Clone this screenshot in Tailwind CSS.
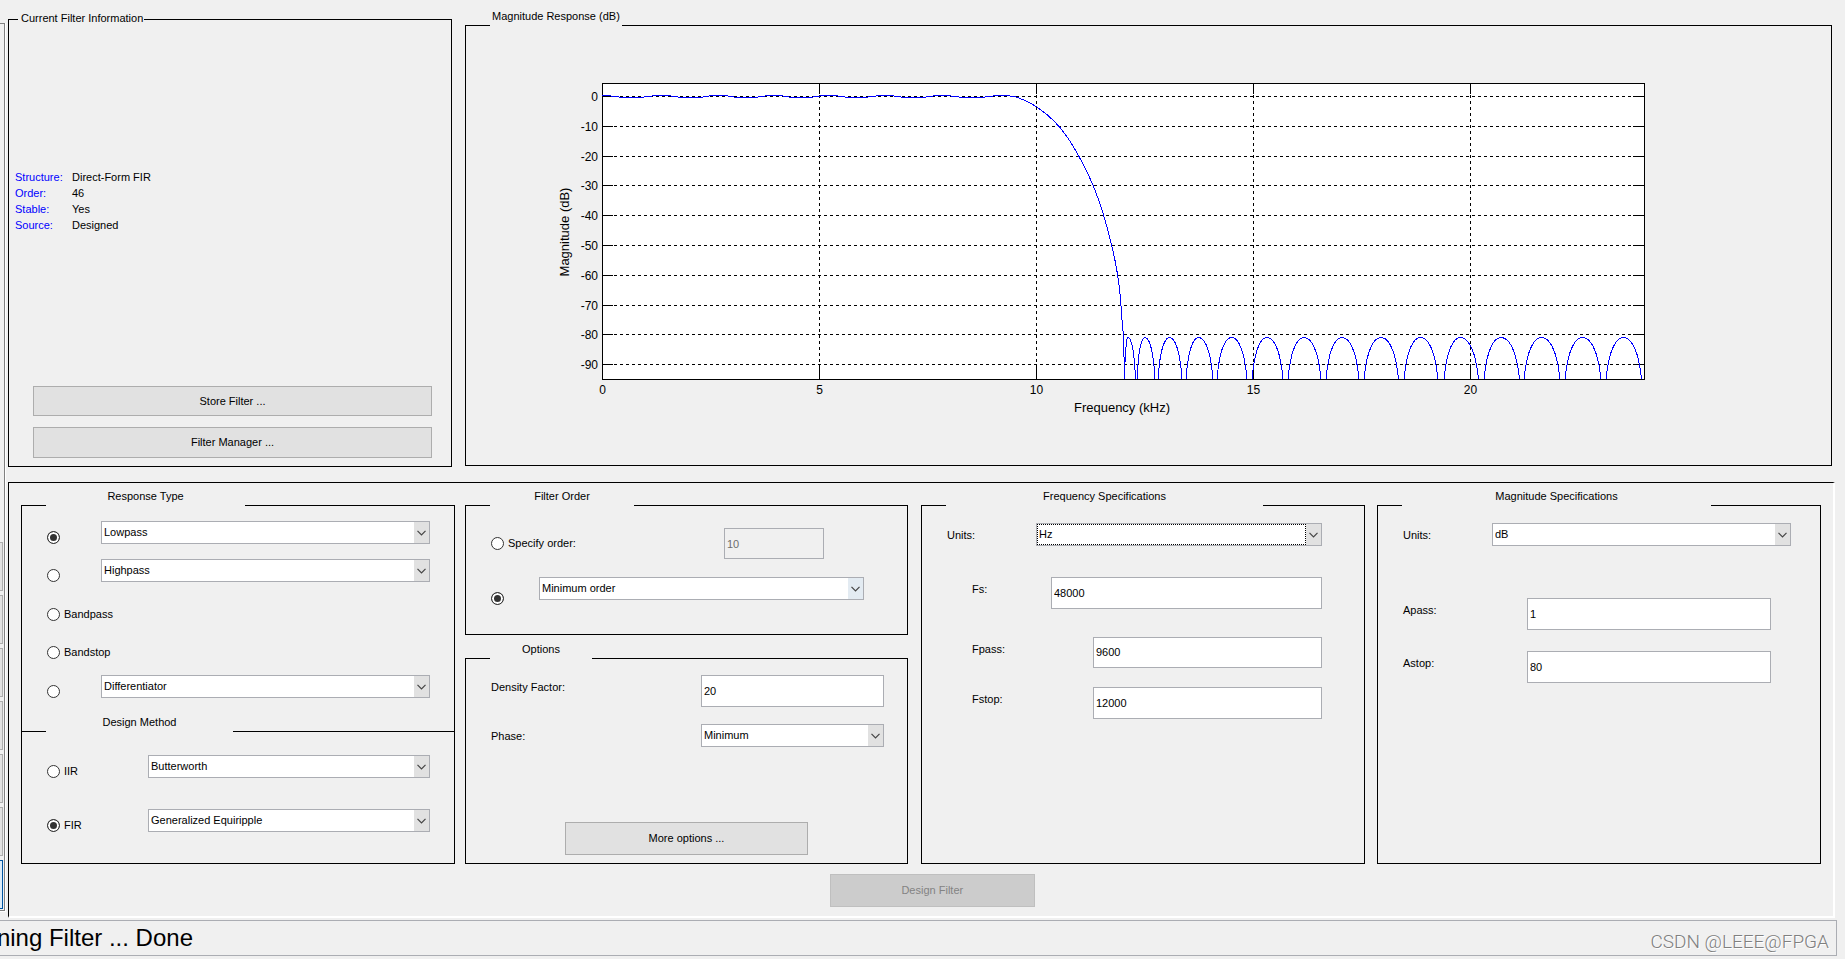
<!DOCTYPE html>
<html lang="en">
<head>
<meta charset="utf-8">
<title>Filter Designer</title>
<script src="https://cdn.jsdelivr.net/npm/@tailwindcss/browser@4"></script>
</head>
<body class="flex min-h-screen flex-col overflow-x-hidden bg-[#f0f0f0] pb-[3px] font-['Liberation_Sans',Arial,sans-serif] text-[11px] leading-3 text-black">
<svg class="hidden" aria-hidden="true">
  <symbol id="chevron" viewBox="0 0 9 6"><path d="M.5 .8 4.5 4.8 8.5 .8" fill="none" stroke="#444" stroke-width="1.2"/></symbol>
</svg>

<div class="flex">
  <!-- Sidebar, cut off by the window's left edge -->
  <aside class="mt-[23px] mb-[6px] flex w-[6px] shrink-0 border-r border-b border-white">
    <div class="flex flex-1 flex-col items-start justify-end gap-1 border-t border-r border-b border-[#808080] pb-px">
      <button type="button" aria-label="Transform" class="h-[49px] w-[3px] border border-l-0 border-[#adadad] bg-[#e1e1e1]"></button>
      <button type="button" aria-label="Quantize" class="h-[49px] w-[3px] border border-l-0 border-[#adadad] bg-[#e1e1e1]"></button>
      <button type="button" aria-label="Realize model" class="h-[49px] w-[3px] border border-l-0 border-[#adadad] bg-[#e1e1e1]"></button>
      <button type="button" aria-label="Pole/zero editor" class="h-[49px] w-[3px] border border-l-0 border-[#adadad] bg-[#e1e1e1]"></button>
      <button type="button" aria-label="Import filter" class="h-[49px] w-[3px] border border-l-0 border-[#adadad] bg-[#e1e1e1]"></button>
      <button type="button" aria-label="Multirate" class="h-[49px] w-[3px] border border-l-0 border-[#adadad] bg-[#e1e1e1]"></button>
      <button type="button" aria-label="Design filter" class="h-[49px] w-[3px] border border-l-0 border-[#0054a0] bg-[#dcebf7]"></button>
    </div>
  </aside>

  <main class="ml-[2px] min-w-0 flex-1 pt-[10px]">
    <div class="mr-[13px] grid grid-cols-[444fr_1367fr] items-start gap-x-[13px]">
      <fieldset class="mt-[3px] min-w-0 border border-black pb-2">
        <legend class="ml-[9px] h-[13px] pr-px pl-[3px] leading-[11px]">Current Filter Information</legend>
        <dl class="mt-[143px] ml-[6px] grid grid-cols-[57px_1fr] leading-4">
          <dt class="text-[#0000ff]">Structure:</dt><dd>Direct-Form FIR</dd>
          <dt class="text-[#0000ff]">Order:</dt><dd>46</dd>
          <dt class="text-[#0000ff]">Stable:</dt><dd>Yes</dd>
          <dt class="text-[#0000ff]">Source:</dt><dd>Designed</dd>
        </dl>
        <div class="mt-[153px] mr-[19px] ml-6 flex flex-col gap-[11px]">
          <button type="button" class="h-[30px] border border-[#adadad] bg-[#e1e1e1]">Store Filter ...</button>
          <button type="button" class="h-[31px] border border-[#adadad] bg-[#e1e1e1] pb-px">Filter Manager ...</button>
        </div>
      </fieldset>

      <fieldset class="min-w-0 border border-black">
        <legend class="ml-6 h-[31px] px-[2px]">Magnitude Response (dB)</legend>
        <svg viewBox="0 0 1365 424" class="block h-auto w-full" role="img" aria-label="Magnitude response plot">
          <g transform="translate(136 42)">
            <rect x="0" y="0" width="1043" height="297" fill="#fff"/>
            <g id="grid" stroke="#000" stroke-width="1" shape-rendering="crispEdges"></g>
            <rect x=".5" y=".5" width="1042" height="296" fill="none" stroke="#000" shape-rendering="crispEdges"/>
            <path id="curve" fill="none" stroke="#0000ff" stroke-width="1" shape-rendering="crispEdges"/>
            <g id="labels" font-size="12"></g>
            <text x="520" y="329" font-size="13" text-anchor="middle">Frequency (kHz)</text>
            <text transform="translate(-33 149) rotate(-90)" font-size="13" text-anchor="middle">Magnitude (dB)</text>
          </g>
        </svg>
      </fieldset>
    </div>

    <form class="mt-[15px] mr-[10px] border-t border-r-2 border-b-2 border-l border-t-black border-r-white border-b-white border-l-black pt-[7px] pb-[9px]">
      <div class="mr-3 ml-3 grid grid-cols-[444fr_456fr_456fr_444fr]">

        <div class="flex min-w-0 flex-col pr-[10px]">
          <fieldset class="min-w-0 border border-b-0 border-black pb-[34px]">
            <legend class="ml-6 h-[31px]"><span class="block w-[199px] text-center">Response Type</span></legend>
            <div class="mr-6 ml-[25px] flex items-end">
              <input type="radio" name="response" aria-label="Lowpass type" checked class="m-0 size-[13px] shrink-0 appearance-none rounded-full border border-[#333] bg-white checked:bg-[#333] checked:shadow-[inset_0_0_0_2px_white]">
              <div class="relative ml-[41px] flex-1">
                <select aria-label="Lowpass" class="block h-[23px] w-full appearance-none border border-[#abadb3] bg-white pb-px pl-[2px]"><option>Lowpass</option></select>
                <span class="pointer-events-none absolute inset-y-px right-px flex w-[15px] items-center justify-center bg-[#e1e1e1]"><svg class="h-[6px] w-[9px]"><use href="#chevron"/></svg></span>
              </div>
            </div>
            <div class="mt-[15px] mr-6 ml-[25px] flex items-end">
              <input type="radio" name="response" aria-label="Highpass type" class="m-0 size-[13px] shrink-0 appearance-none rounded-full border border-[#333] bg-white checked:bg-[#333] checked:shadow-[inset_0_0_0_2px_white]">
              <div class="relative ml-[41px] flex-1">
                <select aria-label="Highpass" class="block h-[23px] w-full appearance-none border border-[#abadb3] bg-white pb-px pl-[2px]"><option>Highpass</option></select>
                <span class="pointer-events-none absolute inset-y-px right-px flex w-[15px] items-center justify-center bg-[#e1e1e1]"><svg class="h-[6px] w-[9px]"><use href="#chevron"/></svg></span>
              </div>
            </div>
            <label class="mt-[26px] ml-[25px] flex gap-1">
              <input type="radio" name="response" class="m-0 size-[13px] shrink-0 appearance-none rounded-full border border-[#333] bg-white checked:bg-[#333] checked:shadow-[inset_0_0_0_2px_white]">Bandpass
            </label>
            <label class="mt-[25px] ml-[25px] flex gap-1">
              <input type="radio" name="response" class="m-0 size-[13px] shrink-0 appearance-none rounded-full border border-[#333] bg-white checked:bg-[#333] checked:shadow-[inset_0_0_0_2px_white]">Bandstop
            </label>
            <div class="mt-[16px] mr-6 ml-[25px] flex items-end">
              <input type="radio" name="response" aria-label="Other type" class="m-0 size-[13px] shrink-0 appearance-none rounded-full border border-[#333] bg-white checked:bg-[#333] checked:shadow-[inset_0_0_0_2px_white]">
              <div class="relative ml-[41px] flex-1">
                <select aria-label="Other response" class="block h-[23px] w-full appearance-none border border-[#abadb3] bg-white pb-px pl-[2px]"><option>Differentiator</option></select>
                <span class="pointer-events-none absolute inset-y-px right-px flex w-[15px] items-center justify-center bg-[#e1e1e1]"><svg class="h-[6px] w-[9px]"><use href="#chevron"/></svg></span>
              </div>
            </div>
          </fieldset>
          <fieldset class="-mt-4 min-w-0 border border-black pb-[31px]">
            <legend class="ml-6 h-[31px]"><span class="block w-[187px] text-center">Design Method</span></legend>
            <div class="mt-2 mr-6 ml-[25px] flex items-end">
              <label class="flex w-[101px] gap-1"><input type="radio" name="method" class="m-0 size-[13px] shrink-0 appearance-none rounded-full border border-[#333] bg-white checked:bg-[#333] checked:shadow-[inset_0_0_0_2px_white]">IIR</label>
              <div class="relative flex-1">
                <select aria-label="IIR method" class="block h-[23px] w-full appearance-none border border-[#abadb3] bg-white pb-px pl-[2px]"><option>Butterworth</option></select>
                <span class="pointer-events-none absolute inset-y-px right-px flex w-[15px] items-center justify-center bg-[#e1e1e1]"><svg class="h-[6px] w-[9px]"><use href="#chevron"/></svg></span>
              </div>
            </div>
            <div class="mt-[31px] mr-6 ml-[25px] flex items-end">
              <label class="flex w-[101px] gap-1"><input type="radio" name="method" checked class="m-0 size-[13px] shrink-0 appearance-none rounded-full border border-[#333] bg-white checked:bg-[#333] checked:shadow-[inset_0_0_0_2px_white]">FIR</label>
              <div class="relative flex-1">
                <select aria-label="FIR method" class="block h-[23px] w-full appearance-none border border-[#abadb3] bg-white pb-px pl-[2px]"><option>Generalized Equiripple</option></select>
                <span class="pointer-events-none absolute inset-y-px right-px flex w-[15px] items-center justify-center bg-[#e1e1e1]"><svg class="h-[6px] w-[9px]"><use href="#chevron"/></svg></span>
              </div>
            </div>
          </fieldset>
        </div>

        <div class="flex min-w-0 flex-col pr-[13px]">
          <fieldset class="min-w-0 border border-black pb-[29px]">
            <legend class="ml-6 h-[31px]"><span class="block w-36 text-center">Filter Order</span></legend>
            <div class="mt-[7px] mr-[83px] ml-[25px] flex items-center justify-between">
              <label class="flex gap-1"><input type="radio" name="order" class="m-0 size-[13px] shrink-0 appearance-none rounded-full border border-[#333] bg-white checked:bg-[#333] checked:shadow-[inset_0_0_0_2px_white]">Specify order:</label>
              <input type="text" aria-label="Order" value="10" disabled class="h-[31px] w-[100px] border border-[#abadb3] bg-[#f0f0f0] pl-[2px] text-[#6d6d6d]">
            </div>
            <div class="mt-[18px] mr-[43px] ml-[25px] flex h-7">
              <input type="radio" name="order" aria-label="Minimum order" checked class="m-0 size-[13px] shrink-0 appearance-none self-end rounded-full border border-[#333] bg-white checked:bg-[#333] checked:shadow-[inset_0_0_0_2px_white]">
              <div class="relative ml-[35px] h-[23px] flex-1">
                <select aria-label="Order mode" class="block h-[23px] w-full appearance-none border border-[#abadb3] bg-white pb-px pl-[2px]"><option>Minimum order</option></select>
                <span class="pointer-events-none absolute inset-y-px right-px flex w-[15px] items-center justify-center bg-[#e3ebf2]"><svg class="h-[6px] w-[9px]"><use href="#chevron"/></svg></span>
              </div>
            </div>
          </fieldset>
          <fieldset class="mt-2 min-w-0 flex-1 border border-black pb-2">
            <legend class="ml-6 h-[31px]"><span class="block w-[102px] text-center">Options</span></legend>
            <div class="mt-px mr-[23px] ml-[25px] flex items-start justify-between">
              <label for="density" class="pt-[6px]">Density Factor:</label>
              <input id="density" type="text" value="20" class="h-8 w-[183px] border border-[#abadb3] bg-white pl-[2px]">
            </div>
            <div class="mt-[17px] mr-[23px] ml-[25px] flex items-start justify-between">
              <label for="phase" class="pt-[6px]">Phase:</label>
              <div class="relative w-[183px]">
                <select id="phase" class="block h-[23px] w-full appearance-none border border-[#abadb3] bg-white pb-px pl-[2px]"><option>Minimum</option></select>
                <span class="pointer-events-none absolute inset-y-px right-px flex w-[15px] items-center justify-center bg-[#e1e1e1]"><svg class="h-[6px] w-[9px]"><use href="#chevron"/></svg></span>
              </div>
            </div>
            <button type="button" class="mx-auto mt-[75px] block h-[33px] w-[243px] border border-[#adadad] bg-[#e1e1e1] pb-px">More options ...</button>
          </fieldset>
        </div>

        <div class="flex min-w-0 pr-3">
          <fieldset class="min-w-0 flex-1 border border-black">
            <legend class="ml-6 h-[31px]"><span class="block w-[317px] text-center">Frequency Specifications</span></legend>
            <div class="mt-[2px] mr-[42px] ml-[25px] flex items-start">
              <label for="funits" class="w-[89px] pt-[6px]">Units:</label>
              <div class="relative flex-1">
                <select id="funits" class="block h-[23px] w-full appearance-none border border-[#abadb3] bg-white pb-px pl-[2px]"><option>Hz</option></select>
                <span class="pointer-events-none absolute inset-y-px right-4 left-px border border-dotted border-black"></span>
                <span class="pointer-events-none absolute inset-y-px right-px flex w-[15px] items-center justify-center bg-[#e1e1e1]"><svg class="h-[6px] w-[9px]"><use href="#chevron"/></svg></span>
              </div>
            </div>
            <div class="mt-[31px] mr-[42px] ml-[50px] flex items-start">
              <label for="fs" class="w-[79px] pt-[6px]">Fs:</label>
              <input id="fs" type="text" value="48000" class="h-8 min-w-0 flex-1 border border-[#abadb3] bg-white pl-[2px]">
            </div>
            <div class="mt-[28px] mr-[42px] ml-[50px] flex items-start">
              <label for="fpass" class="w-[121px] pt-[6px]">Fpass:</label>
              <input id="fpass" type="text" value="9600" class="h-[31px] min-w-0 flex-1 border border-[#abadb3] bg-white pb-px pl-[2px]">
            </div>
            <div class="mt-[19px] mr-[42px] ml-[50px] flex items-start">
              <label for="fstop" class="w-[121px] pt-[6px]">Fstop:</label>
              <input id="fstop" type="text" value="12000" class="h-8 min-w-0 flex-1 border border-[#abadb3] bg-white pl-[2px]">
            </div>
          </fieldset>
        </div>

        <fieldset class="min-w-0 border border-black">
          <legend class="ml-6 h-[31px]"><span class="block w-[309px] text-center">Magnitude Specifications</span></legend>
          <div class="mt-[2px] mr-[29px] ml-[25px] flex items-start">
            <label for="munits" class="w-[89px] pt-[6px]">Units:</label>
            <div class="relative flex-1">
              <select id="munits" class="block h-[23px] w-full appearance-none border border-[#abadb3] bg-white pb-px pl-[2px]"><option>dB</option></select>
              <span class="pointer-events-none absolute inset-y-px right-px flex w-[15px] items-center justify-center bg-[#e1e1e1]"><svg class="h-[6px] w-[9px]"><use href="#chevron"/></svg></span>
            </div>
          </div>
          <div class="mt-[52px] mr-[49px] ml-[25px] flex items-start">
            <label for="apass" class="w-[124px] pt-[6px]">Apass:</label>
            <input id="apass" type="text" value="1" class="h-8 min-w-0 flex-1 border border-[#abadb3] bg-white pl-[2px]">
          </div>
          <div class="mt-[21px] mr-[49px] ml-[25px] flex items-start">
            <label for="astop" class="w-[124px] pt-[6px]">Astop:</label>
            <input id="astop" type="text" value="80" class="h-8 min-w-0 flex-1 border border-[#abadb3] bg-white pl-[2px]">
          </div>
        </fieldset>
      </div>
      <button type="button" disabled class="mt-[10px] ml-[45%] block h-[33px] w-[205px] border border-[#bfbfbf] bg-[#cccccc] pb-px text-[#838383]">Design Filter</button>
    </form>
  </main>
</div>

<footer class="mt-[2px] mr-2 flex h-9 items-center justify-between border-t border-r border-b border-[#abadb3] pr-[7px]">
  <p class="flex w-[193px] justify-end text-2xl leading-[34px] whitespace-nowrap">ning Filter ... Done</p>
  <p class="pt-[7px] font-[Roboto,sans-serif] text-[19px] leading-6 font-light text-[#808080] [text-shadow:1px_1px_0_#fff]">CSDN @LEEE@FPGA</p>
</footer>

<script>
  const W = 1042, H = 296, PX_KHZ = W / 24, PX_DB = 2.98, ZERO = 13.5;
  const fx = f => Math.floor(f * PX_KHZ) + 0.5;
  const dy = d => Math.floor(ZERO - d * PX_DB) + 0.5;

  let grid = '', labels = '';
  for (const f of [5, 10, 15, 20]) {
    const x = fx(f);
    grid += `<path d="M${x} 0V${H}" stroke-dasharray="3 3"/><path d="M${x} 0v11M${x} ${H}v-15"/>`;
  }
  for (const f of [0, 5, 10, 15, 20])
    labels += `<text x="${fx(f)}" y="311" text-anchor="middle">${f}</text>`;
  for (let d = 0; d >= -90; d -= 10) {
    const y = dy(d);
    grid += `<path d="M0 ${y}H${W}" stroke-dasharray="3 3"/><path d="M0 ${y}h11M${W} ${y}h-11"/>`;
    labels += `<text x="-4" y="${y + 4}" text-anchor="end">${d}</text>`;
  }
  document.getElementById('grid').innerHTML = grid;
  document.getElementById('labels').innerHTML = labels;

  // Passband ripple: [start, end, level] runs
  const ripple = [[0,9,-1],[9,17,0],[17,42,1],[42,50,0],[50,69,-1],[69,76,0],[76,101,1],[101,107,0],[107,126,-1],[126,132,0],
    [132,156,1],[156,163,0],[163,181,-1],[181,187,0],[187,211,1],[211,218,0],[218,236,-1],[236,243,0],[243,266,1],[266,274,0],
    [274,292,-1],[292,299,0],[299,324,1],[324,331,0],[331,349,-1],[349,357,0],[357,383,1],[383,391,0],[391,408,-1],[408,413,0]];
  let d = '';
  for (const [a, b, l] of ripple) d += `M${a} ${13.5 + l}H${b}`;

  // Transition band, smoothed through its sample points
  const fall = [[412,13.5],[418,15.5],[426,19],[434.7,24],[446,32.5],[457.5,44],[468.5,59],[477,73.5],[485,89],[491.7,104],[497.3,119],
    [501.7,132.5],[506,148],[509.7,162.5],[513,177.5],[515.7,192.5],[517.7,207.5],[519,222.5],[520.5,244],[521.5,254],[522.5,296]];
  d += `M${fall[0]}`;
  for (let i = 0; i < fall.length - 1; i++) {
    const p0 = fall[i - 1] || fall[i], p1 = fall[i], p2 = fall[i + 1], p3 = fall[i + 2] || p2;
    d += `C${p1[0] + (p2[0] - p0[0]) / 6} ${p1[1] + (p2[1] - p0[1]) / 6} ${p2[0] - (p3[0] - p1[0]) / 6} ${p2[1] - (p3[1] - p1[1]) / 6} ${p2}`;
  }

  // Stopband lobes: left foot, peak, right foot
  const lobes = [[522.5,526,533.5],[535,543,553],[556,567.5,580],[584,596.5,611],[615,629.5,645],[650,665,681],
    [686,702,719],[724,740,757],[762,779,796.5],[802,818.5,836],[842,858.5,876.5],[882,899,917.5],
    [922,939.5,958],[963,980.5,999],[1004,1021.5,1039.5]];
  const A = Math.acos(0.2);
  for (const [l, p, r] of lobes) {
    for (let i = -12; i <= 12; i++) {
      const t = i / 12;
      const x = t < 0 ? p + t * (p - l) : p + t * (r - p);
      const y = 254.5 - 41.5 * Math.log(Math.cos(t * A)) / Math.log(5);
      d += `${i === -12 ? 'M' : 'L'}${x.toFixed(1)} ${y.toFixed(1)}`;
    }
  }
  document.getElementById('curve').setAttribute('d', d);
</script>
</body>
</html>
